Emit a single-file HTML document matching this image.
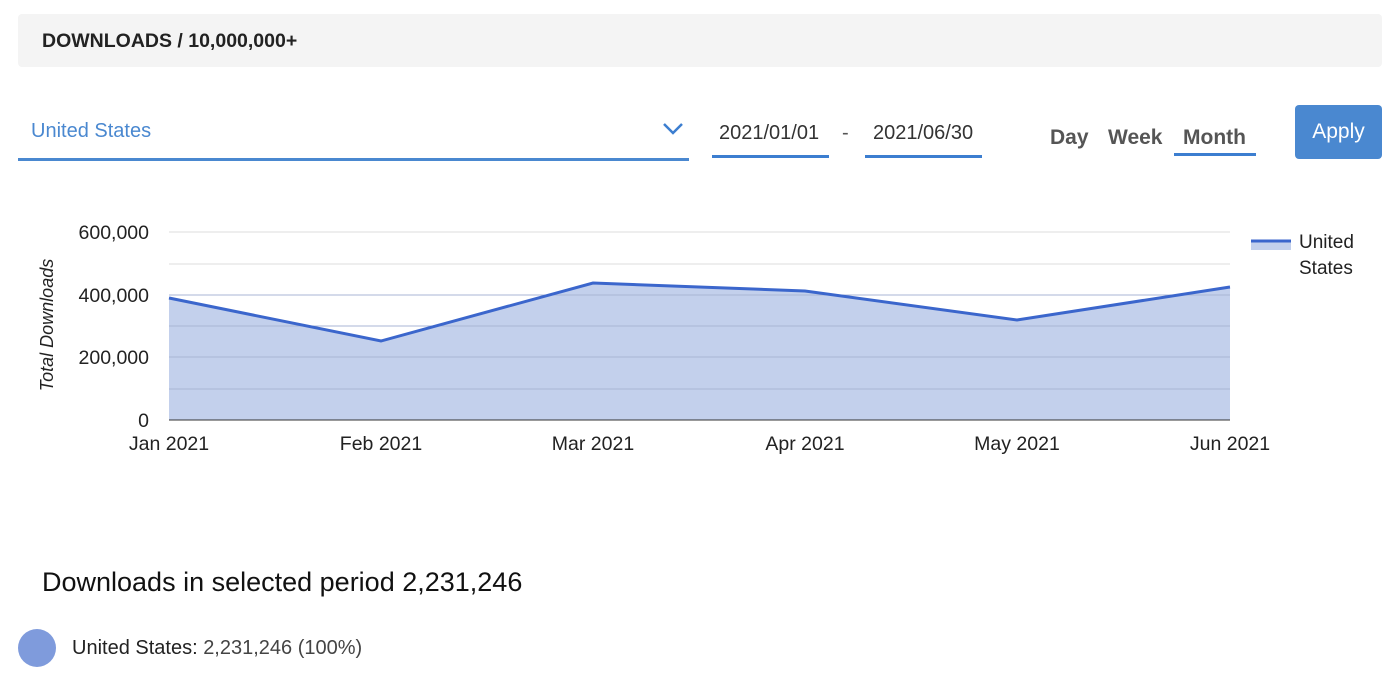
<!DOCTYPE html>
<html><head><meta charset="utf-8"><style>
body{margin:0;width:1400px;height:677px;background:#fff;font-family:"Liberation Sans",Arial,sans-serif;position:relative;overflow:hidden}
.hdr{position:absolute;left:18px;top:14px;width:1364px;height:53px;background:#f4f4f4;border-radius:4px}
.hdr span{position:absolute;left:42px;top:16px;font-size:19.5px;font-weight:bold;color:#222;left:24px}
.abs{position:absolute}
</style></head><body>
<div class="hdr"><span>DOWNLOADS / 10,000,000+</span></div>
<div class="abs" style="left:31px;top:120px;font-size:20px;color:#4a88d0">United States</div>
<svg class="abs" style="left:662px;top:122px" width="22" height="14"><path d="M2 2 L11 11 L20 2" stroke="#3c7ed0" stroke-width="2.5" fill="none"/></svg>
<div class="abs" style="left:18px;top:158px;width:671px;height:3px;background:#4a88d0"></div>
<div class="abs" style="left:719px;top:122px;font-size:20px;color:#333">2021/01/01</div>
<div class="abs" style="left:712px;top:155px;width:117px;height:3px;background:#3c7ed0"></div>
<div class="abs" style="left:842px;top:122px;font-size:20px;color:#555">-</div>
<div class="abs" style="left:873px;top:122px;font-size:20px;color:#333">2021/06/30</div>
<div class="abs" style="left:865px;top:155px;width:117px;height:3px;background:#3c7ed0"></div>
<div class="abs" style="left:1050px;top:126px;font-size:21px;font-weight:bold;color:#555">Day</div>
<div class="abs" style="left:1108px;top:126px;font-size:21px;font-weight:bold;color:#555">Week</div>
<div class="abs" style="left:1183px;top:126px;font-size:21px;font-weight:bold;color:#555">Month</div>
<div class="abs" style="left:1174px;top:153px;width:82px;height:3px;background:#3c7ed0"></div>
<div class="abs" style="left:1295px;top:105px;width:87px;height:54px;background:#4a88d0;border-radius:4px;color:#fff;font-size:21px;text-align:center;line-height:54px">Apply</div>
<svg class="abs" style="left:0;top:0" width="1400" height="500">
<g stroke="#ddd" stroke-width="1"><line x1="169" x2="1230" y1="232" y2="232"/><line x1="169" x2="1230" y1="264" y2="264"/><line x1="169" x2="1230" y1="295" y2="295"/><line x1="169" x2="1230" y1="326" y2="326"/><line x1="169" x2="1230" y1="357" y2="357"/><line x1="169" x2="1230" y1="389" y2="389"/></g>
<path d="M169 298 L381 341 L593 283 L805 291 L1017 320 L1230 287 L1230 420 L169 420 Z" fill="#c3d0ec"/>
<g stroke="#a9b6d4" stroke-width="1"><line x1="169" x2="1230" y1="295" y2="295"/><line x1="169" x2="1230" y1="326" y2="326"/><line x1="169" x2="1230" y1="357" y2="357"/><line x1="169" x2="1230" y1="389" y2="389"/></g>
<path d="M169 298 L381 341 L593 283 L805 291 L1017 320 L1230 287" fill="none" stroke="#3b66cc" stroke-width="3"/>
<line x1="169" x2="1230" y1="420" y2="420" stroke="#333" stroke-width="1"/>
<g font-size="19.5" fill="#222" text-anchor="end"><text x="149" y="239">600,000</text><text x="149" y="302">400,000</text><text x="149" y="364">200,000</text><text x="149" y="427">0</text></g>
<g font-size="19.5" fill="#222" text-anchor="middle"><text x="169" y="450">Jan 2021</text><text x="381" y="450">Feb 2021</text><text x="593" y="450">Mar 2021</text><text x="805" y="450">Apr 2021</text><text x="1017" y="450">May 2021</text><text x="1230" y="450">Jun 2021</text></g>
<text transform="translate(53 325) rotate(-90)" font-size="18" font-style="italic" fill="#222" text-anchor="middle">Total Downloads</text>
<rect x="1251" y="240" width="40" height="10" fill="#c3d0ec"/><line x1="1251" x2="1291" y1="241" y2="241" stroke="#3b66cc" stroke-width="3"/>
<text x="1299" y="248" font-size="19" fill="#222">United</text><text x="1299" y="274" font-size="19" fill="#222">States</text>
</svg>
<div class="abs" style="left:42px;top:567px;font-size:27px;color:#111">Downloads in selected period 2,231,246</div>
<div class="abs" style="left:18px;top:629px;width:38px;height:38px;border-radius:50%;background:#7f9bdc"></div>
<div class="abs" style="left:72px;top:637px;font-size:20px;color:#222">United States: <span style="color:#444">2,231,246 (100%)</span></div>
</body></html>
